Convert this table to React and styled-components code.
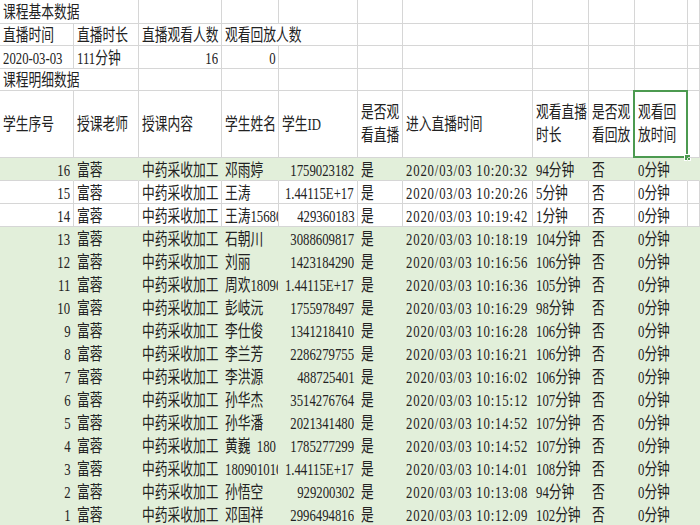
import React from "react";
import styled, { createGlobalStyle } from "styled-components";

const GRID = "#d6d6d6";
const FILL = "#e2efda";
const COLS = "74px 65px 83px 57px 79px 45px 130px 56px 46px 53px 1fr";

const GlobalStyle = createGlobalStyle`
  html, body {
    margin: 0;
    padding: 0;
    background: #fff;
    overflow: hidden;
  }
  body {
    font-family: "Liberation Serif", "Noto Sans CJK SC", serif;
    font-size: 17px;
    color: #222;
  }
`;

const Sheet = styled.div`
  width: 700px;
  height: 525px;
  overflow: hidden;
`;

const Row = styled.div`
  display: grid;
  grid-template-columns: ${COLS};
  height: ${(p) => p.$h}px;
  background: ${(p) => (p.$fill ? FILL : "#fff")};
`;

const Cell = styled.div`
  grid-column: span ${(p) => p.$span || 1};
  display: flex;
  align-items: center;
  justify-content: ${(p) => (p.$right ? "flex-end" : "flex-start")};
  padding: ${(p) => (p.$header ? "0 3px" : "3px 3px 0")};
  line-height: ${(p) => (p.$header ? "23px" : "20px")};
  overflow: ${(p) => (p.$selected ? "visible" : "hidden")};
  position: relative;
  min-width: 0;
  border-right: 1px solid ${(p) => p.$vline || GRID};
  border-bottom: 1px solid ${(p) => p.$hline || GRID};
`;

// Song-style fonts are narrow; squeeze the glyphs to the same width
const Text = styled.span`
  display: inline-block;
  white-space: pre;
  flex-shrink: 0;
  letter-spacing: ${(p) => (p.$spaced ? "1.1px" : "0")};
  transform: scaleX(0.75);
  transform-origin: ${(p) => (p.$right ? "right" : "left")} center;
`;

const Selection = styled.div`
  position: absolute;
  top: -1px;
  left: -2px;
  right: -1px;
  bottom: -1px;
  border: 2px solid #4c9a50;
  pointer-events: none;
`;

const Handle = styled.div`
  position: absolute;
  right: -5px;
  bottom: -5px;
  width: 5px;
  height: 5px;
  background: #4c9a50;
  border: 1px solid #fff;
`;

const students = [
  [16, "邓雨婷", "1759023182", "10:20:32", "94分钟", true],
  [15, "王涛", "1.44115E+17", "10:20:26", "5分钟", false],
  [14, "王涛15680", "429360183", "10:19:42", "1分钟", false],
  [13, "石朝川", "3088609817", "10:18:19", "104分钟", true],
  [12, "刘丽", "1423184290", "10:16:56", "106分钟", true],
  [11, "周欢18090", "1.44115E+17", "10:16:36", "105分钟", true],
  [10, "彭岐沅", "1755978497", "10:16:29", "98分钟", true],
  [9, "李仕俊", "1341218410", "10:16:28", "106分钟", true],
  [8, "李兰芳", "2286279755", "10:16:21", "106分钟", true],
  [7, "李洪源", "488725401", "10:16:02", "106分钟", true],
  [6, "孙华杰", "3514276764", "10:15:12", "107分钟", true],
  [5, "孙华潘", "2021341480", "10:14:52", "107分钟", true],
  [4, "黄巍  180", "1785277299", "10:14:52", "107分钟", true],
  [3, "180901010", "1.44115E+17", "10:14:01", "108分钟", true],
  [2, "孙悟空", "929200302", "10:13:08", "94分钟", true],
  [1, "邓国祥", "2996494816", "10:12:09", "102分钟", true],
];

const headers = [
  ["学生序号"],
  ["授课老师"],
  ["授课内容"],
  ["学生姓名"],
  ["学生ID"],
  ["是否观", "看直播"],
  ["进入直播时间"],
  ["观看直播", "时长"],
  ["是否观", "看回放"],
  ["观看回", "放时间"],
];

function C({ children, right, spaced, ...rest }) {
  return (
    <Cell $right={right} {...rest}>
      <Text $right={right} $spaced={spaced}>
        {children}
      </Text>
    </Cell>
  );
}

function StudentRow({ s, next }) {
  const [no, name, id, time, dur, fill] = s;
  const v = fill ? FILL : GRID;
  const h = fill && next && next[5] ? FILL : GRID;
  const cells = [
    [String(no), true],
    ["富蓉"],
    ["中药采收加工"],
    [name],
    [id, true],
    ["是"],
    ["2020/03/03 " + time, false, true],
    [dur],
    ["否"],
    ["0分钟"],
    [""],
  ];
  return (
    <Row $h={23} $fill={fill}>
      {cells.map(([t, right, spaced], i) => (
        <C key={i} right={right} spaced={spaced} $vline={v} $hline={h}>
          {t}
        </C>
      ))}
    </Row>
  );
}

export default function App() {
  return (
    <Sheet>
      <GlobalStyle />
      <Row $h={24}>
        <C $span={2}>课程基本数据</C>
        {Array.from({ length: 9 }).map((_, i) => (
          <C key={i} />
        ))}
      </Row>
      <Row $h={22}>
        <C>直播时间</C>
        <C>直播时长</C>
        <C>直播观看人数</C>
        <C $span={2}>观看回放人数</C>
        {Array.from({ length: 6 }).map((_, i) => (
          <C key={i} />
        ))}
      </Row>
      <Row $h={23}>
        <C>2020-03-03</C>
        <C>111分钟</C>
        <C right>16</C>
        <C right>0</C>
        {Array.from({ length: 7 }).map((_, i) => (
          <C key={i} />
        ))}
      </Row>
      <Row $h={22}>
        <C $span={2}>课程明细数据</C>
        {Array.from({ length: 9 }).map((_, i) => (
          <C key={i} />
        ))}
      </Row>
      <Row $h={67}>
        {headers.map((lines, i) => (
          <Cell key={i} $header $selected={i === 9}>
            <Text>
              {lines.map((l, j) => (
                <React.Fragment key={j}>
                  {j > 0 && <br />}
                  {l}
                </React.Fragment>
              ))}
            </Text>
            {i === 9 && (
              <Selection>
                <Handle />
              </Selection>
            )}
          </Cell>
        ))}
        <Cell $header />
      </Row>
      {students.map((s, i) => (
        <StudentRow key={s[0]} s={s} next={students[i + 1]} />
      ))}
    </Sheet>
  );
}
